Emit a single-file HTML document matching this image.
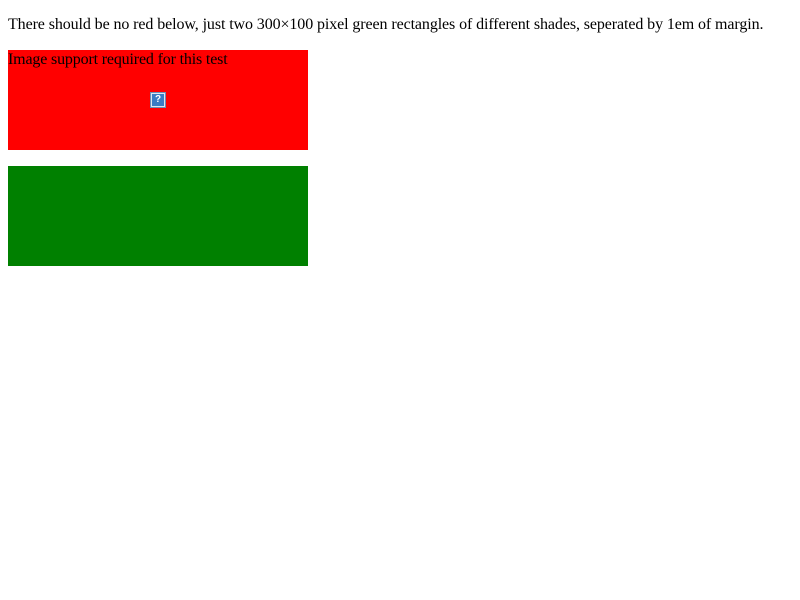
<!DOCTYPE html>
<html><head><style>
html,body{margin:0;padding:0;background:#fff;}
body{margin:8px;font-family:"Liberation Serif",serif;font-size:16px;color:#000;}
p{margin:16px 0 0;line-height:18px;letter-spacing:-0.1px;}
.box{width:300px;height:100px;position:relative;}
.red{background:#f00;margin-top:16px;}
.green{background:#008000;margin-top:16px;}
.red span{position:absolute;left:0;top:1px;line-height:18px;letter-spacing:-0.16px;}
.ic{position:absolute;left:143px;top:43px;width:12px;height:12px;background:#3a7cc4;border:1px solid #dde6ee;outline:1px solid #6a8fb8;color:#fff;font:bold 10px "Liberation Sans",sans-serif;text-align:center;line-height:12px;}
</style></head><body>
<p>There should be no red below, just two 300×100 pixel green rectangles of different shades, seperated by 1em of margin.</p>
<div class="box red"><span>Image support required for this test</span><div class="ic">?</div></div>
<div class="box green"></div>
</body></html>
